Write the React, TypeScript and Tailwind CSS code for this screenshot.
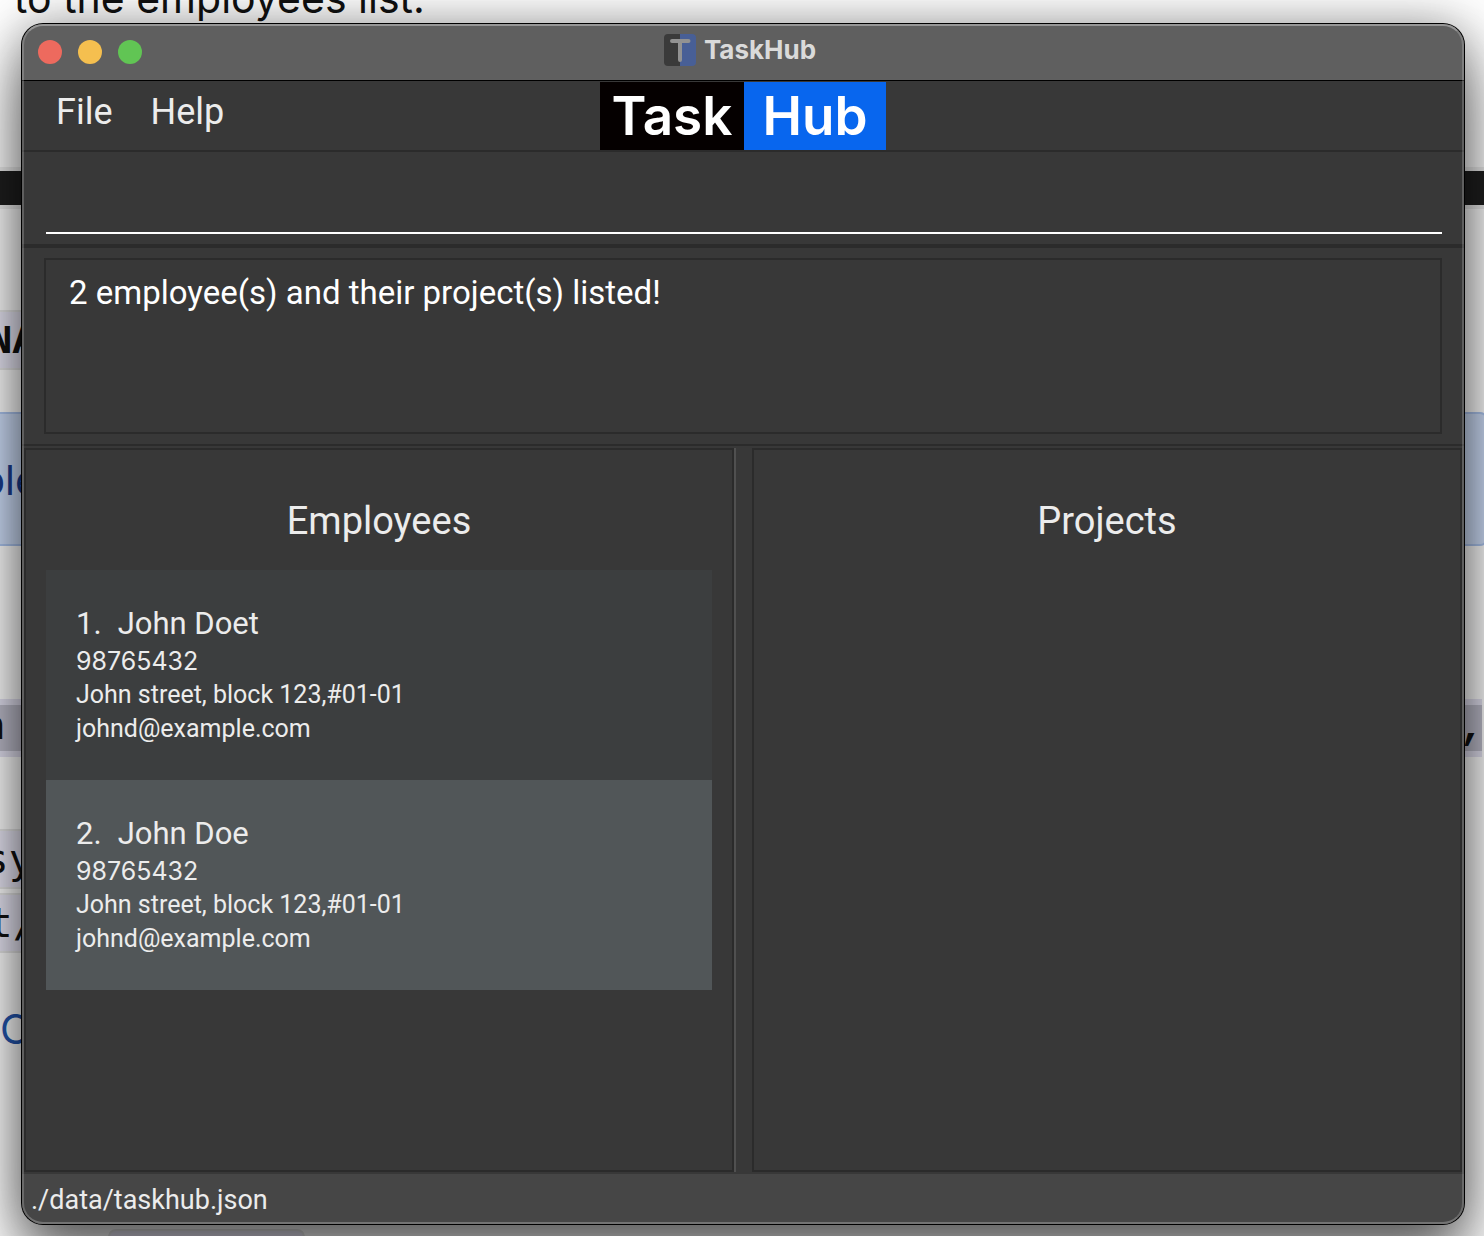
import React from "react";

type Employee = { id: number; name: string; phone: string; address: string; email: string };

const employees: Employee[] = [
  { id: 1, name: "John Doet", phone: "98765432", address: "John street, block 123,#01-01", email: "johnd@example.com" },
  { id: 2, name: "John Doe", phone: "98765432", address: "John street, block 123,#01-01", email: "johnd@example.com" },
];

function DocumentBehind() {
  return (
    <div aria-hidden="true" className="absolute inset-0 flex flex-col overflow-hidden bg-white text-[41px] text-[#111111]">
      <p className="-mt-6 h-[48px] shrink-0 pl-[14px] leading-[44px] whitespace-nowrap">to the employees list.</p>
      <div className="mt-[143px] h-[42px] shrink-0 border-y-4 border-[#eeeeee] bg-[#1f1f1f]" />
      <div className="mt-[101px] h-[60px] w-1/2 shrink-0 border-y-2 border-[#e6e6e6] bg-[#eae8f6] font-['Liberation_Mono',monospace] font-bold leading-[60px]">
        <span className="-ml-3">NA</span>
      </div>
      <div className="mt-[42px] -mr-1 h-[134px] shrink-0 rounded-r-lg border-2 border-l-0 border-[#adc6f0] bg-[#cfdffa] leading-[132px] text-[#1b3d8f]">
        <span className="-ml-5">ple</span>
      </div>
      <div className="mt-[153px] mr-[2px] flex h-[58px] shrink-0 items-center justify-between border-y-[6px] border-[#e4e2f2] bg-[#bebdcb] font-['Liberation_Mono',monospace] font-bold leading-[50px]">
        <span className="-ml-5">n</span>
        <span className="-mr-[2px]">,</span>
      </div>
      <div className="mt-[72px] h-[60px] w-1/2 shrink-0 border-y-2 border-[#e6e6e6] bg-[#eae8f6] font-['DejaVu_Sans_Mono',monospace] leading-[56px]">
        <span className="-ml-4">sy</span>
      </div>
      <div className="mt-1 h-[60px] w-1/2 shrink-0 border-y-2 border-[#e6e6e6] bg-[#eae8f6] font-['DejaVu_Sans_Mono',monospace] leading-[56px]">
        <span className="-ml-3">t/</span>
      </div>
      <p className="mt-[46px] h-[60px] shrink-0 leading-[60px] text-[#2456b0]">C</p>
      <div className="mt-[170px] ml-[108px] h-[60px] w-[197px] shrink-0 rounded-lg border-2 border-[#e6e6e6] bg-[#eae8f6]" />
    </div>
  );
}

function AppIcon() {
  return (
    <svg viewBox="0 0 32 32" className="size-8" aria-hidden="true">
      <path d="M4 0H16V32H4A4 4 0 0 1 0 28V4A4 4 0 0 1 4 0Z" fill="#3a3a3a" />
      <path d="M16 0H28A4 4 0 0 1 32 4V28A4 4 0 0 1 28 32H16Z" fill="#485f96" />
      <path d="M8 7H24.500M16 7V26" stroke="#929292" strokeWidth="4" strokeLinecap="round" fill="none" />
    </svg>
  );
}

function TitleBar() {
  return (
    <header className="grid h-[57px] shrink-0 grid-cols-[1fr_auto_1fr] items-center border-b border-black bg-[#5f5f5f] px-4 font-['Inter',sans-serif]">
      <div className="flex gap-4">
        <button aria-label="Close" className="size-6 rounded-full bg-[#ed6a5e]" />
        <button aria-label="Minimize" className="size-6 rounded-full bg-[#f5bf4f]" />
        <button aria-label="Zoom" className="size-6 rounded-full bg-[#61c554]" />
      </div>
      <h1 className="flex items-center gap-2 pr-[6px] pb-1 text-[26px] leading-8 font-bold text-[#dadada]">
        <AppIcon />
        TaskHub
      </h1>
    </header>
  );
}

function MenuBar() {
  return (
    <div className="grid h-[71px] shrink-0 grid-cols-[1fr_auto_1fr] border-b-2 border-[#2b2b2b]">
      <nav className="flex items-start gap-[38px] pt-2 pl-[34px] text-[36px] leading-[46px]">
        <button>File</button>
        <button>Help</button>
      </nav>
      <div className="flex pt-px font-['Inter',sans-serif] text-[53px] leading-[68px] font-semibold text-white">
        <span className="w-[144px] bg-[#050000] text-center">Task</span>
        <span className="w-[142px] bg-[#0866ee] text-center">Hub</span>
      </div>
    </div>
  );
}

function EmployeeCard({ employee, shaded }: { employee: Employee; shaded: boolean }) {
  return (
    <li className={`h-[210px] pt-[34px] pl-[30px] text-[25px] leading-[34px] ${shaded ? "bg-[#515658]" : "bg-[#3c3e3f]"}`}>
      <h3 className="flex gap-4 text-[31px] leading-[40px]">
        <span>{employee.id}.</span>
        <span>{employee.name}</span>
      </h3>
      <p className="font-['Inter',sans-serif]">{employee.phone}</p>
      <p>{employee.address}</p>
      <p>{employee.email}</p>
    </li>
  );
}

export default function App() {
  return (
    <div className="relative flex min-h-screen overflow-hidden pt-[23px] pr-[19px] pb-[11px] pl-[21px] font-['Inter','Liberation_Sans',sans-serif]">
      <DocumentBehind />
      <main className="relative flex flex-1 flex-col rounded-[22px] bg-black p-px font-['Roboto','Liberation_Sans',sans-serif] text-[#ececec] shadow-[0_36px_60px_rgba(0,0,0,0.55),0_0_50px_rgba(0,0,0,0.35)]">
        <div className="flex flex-1 flex-col overflow-hidden rounded-[21px] bg-[#383838]">
          <TitleBar />
          <MenuBar />
          <div className="h-24 shrink-0 border-b-4 border-[#2b2b2b] pr-[22px] pl-6">
            <input
              aria-label="Command"
              className="h-[82px] w-full border-b-2 border-white bg-transparent text-[33px] outline-none"
            />
          </div>
          <div className="h-[198px] shrink-0 border-b-2 border-[#2b2b2b] px-[22px] pt-[10px]">
            <output className="block h-[176px] border-2 border-[#2b2b2b] px-[23px] pt-3 text-[33px] leading-[42px] text-white">
              2 employee(s) and their project(s) listed!
            </output>
          </div>
          <div className="mt-[2px] flex flex-1 px-[2px]">
            <section className="flex-1 border-2 border-[#2b2b2b] px-5 pt-12">
              <h2 className="text-center text-[38px] leading-[46px]">Employees</h2>
              <ul className="mt-[26px]">
                {employees.map((e, i) => (
                  <EmployeeCard key={e.id} employee={e} shaded={i % 2 === 1} />
                ))}
              </ul>
            </section>
            <div className="w-[18px] border-l-2 border-[#505050]" />
            <section className="flex-1 border-2 border-[#2b2b2b] px-5 pt-12">
              <h2 className="text-center text-[38px] leading-[46px]">Projects</h2>
            </section>
          </div>
          <footer className="mt-[2px] h-[50px] shrink-0 bg-[#464646] pt-[5px] pl-[9px] text-[27px] leading-[42px]">
            ./data/taskhub.json
          </footer>
        </div>
        <div className="pointer-events-none absolute inset-px rounded-[21px] border-2 border-t-white/35 border-r-white/20 border-b-white/25 border-l-white/20" />
      </main>
    </div>
  );
}
